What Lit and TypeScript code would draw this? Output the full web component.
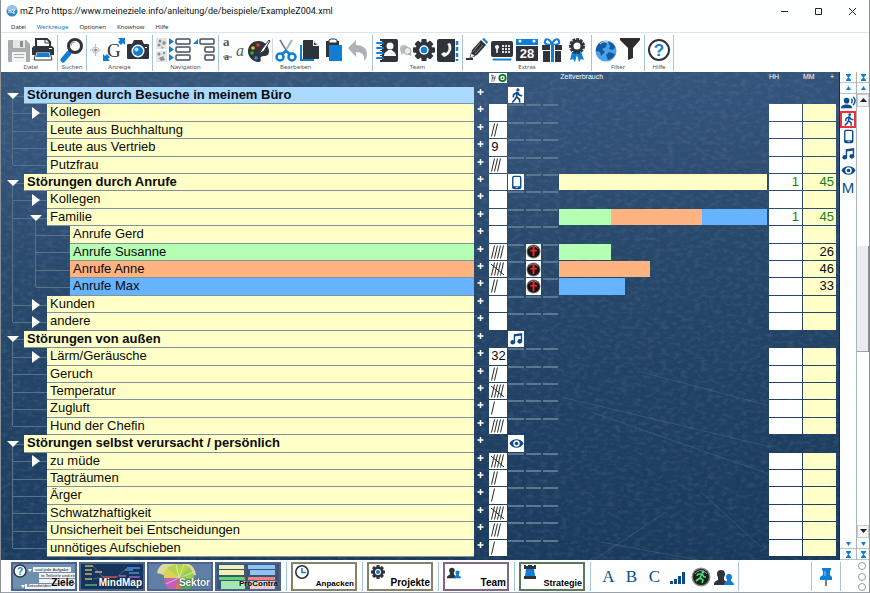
import { LitElement, html, css, svg, nothing } from "lit";
import { customElement } from "lit/decorators.js";
import { classMap } from "lit/directives/class-map.js";
import { styleMap } from "lit/directives/style-map.js";

const INK = "#2f343a";
const BLUE = "#0f7fd6";
const NAVY = "#0d4c8c";

const gear = (cx: number, cy: number, r: number) => svg`
  <g transform="translate(${cx} ${cy})" fill=${INK}>
    ${[0, 45, 90, 135].map((a) => svg`
      <rect x=${-r * 0.24} y=${-r} width=${r * 0.48} height=${r * 2} rx="1" transform="rotate(${a})"></rect>`)}
    <circle r=${r * 0.76}></circle>
    <circle r=${r * 0.43} fill="#fff"></circle>
    <circle r=${r * 0.3} fill=${BLUE}></circle>
  </g>`;

/* Toolbar drawings: 22x24 for large buttons, 11x24 for narrow ones. */
const TOOL_ICONS: Record<string, unknown> = {
  save: svg`<path d="M0 3a1 1 0 0 1 1-1h17l4 4v17a1 1 0 0 1-1 1H1a1 1 0 0 1-1-1z" fill="#a9acaf"/>
    <path d="M5 2h12v8H5z" fill="#e4e6e7"/><path d="M12 3h3v6h-3z" fill="#8c8f92"/>
    <path d="M4 14h14v10H4z" fill="#f3f3f3"/><path d="M6 16h10v1H6zM6 19h10v1H6z" fill="#a9acaf"/>`,
  print: svg`<path d="M4 8V1h11l3 3v4" fill="#fff" stroke=${INK} stroke-width="2"/>
    <path d="M13 1v4h5" fill="none" stroke=${INK} stroke-width="1"/>
    <path d="M2 8h18l2 2v7h-4v-3H4v3H0v-7z" fill=${INK}/><path d="M17 10h3v1h-3z" fill="#fff"/>
    <path d="M4 14h14l2 8H2z" fill="#fff" stroke=${INK} stroke-width="1"/><path d="M5 15h12l1 4H4z" fill=${BLUE}/>`,
  search: svg`<path d="M8 15 2 22" stroke=${BLUE} stroke-width="5" stroke-linecap="round"/>
    <circle cx="14" cy="8" r="6.500" fill="#fff" stroke=${INK} stroke-width="3"/>
    <path d="M10 8a4 4 0 0 1 4-4" fill="none" stroke="#9aa" stroke-width="1"/>`,
  target: svg`<g fill="none" stroke="#b9c0c8"><circle cx="5.500" cy="12" r="3"/><path d="M5.500 6v12M0 12h11"/></g>
    <circle cx="5.500" cy="12" r="1.500" fill="#8d959e"/>`,
  gscale: svg`<text x="4" y="19" font-family="Liberation Serif, serif" font-size="19" fill=${INK}>G</text>
    <path d="M15 0h7v7l-2-2-2 2-3-3 2-2z" fill=${BLUE}/><path d="M0 23h7l-2-2 2-2-3-3-2 2-2-2z" fill=${BLUE}/>`,
  camera: svg`<path d="M1 6h4l2-4h8l2 4h4a1 1 0 0 1 1 1v13a1 1 0 0 1-1 1H1a1 1 0 0 1-1-1V7a1 1 0 0 1 1-1z" fill=${INK}/>
    <circle cx="11" cy="13" r="6.500" fill="#fff"/><circle cx="11" cy="13" r="5" fill=${BLUE}/><circle cx="9.500" cy="11.500" r="2" fill="#bfe3ff"/>
    <path d="M18 9h2v1h-2z" fill="#fff"/>`,
  marks: svg`<path d="M0 0h11v11H0zM0 13h11v11H0z" fill="#e3e4e5"/>
    <g fill="#8b9096"><circle cx="4" cy="3" r="1.500"/><circle cx="8" cy="5" r="1.800"/><circle cx="3" cy="7" r="1.500"/><path d="M5 8l3 2-2 .5z"/>
    <circle cx="3" cy="16" r="1.500"/><circle cx="8" cy="15" r="1.200"/><path d="M3 20l4-2 2 4-4 1z"/></g>`,
  tree: svg`<g fill="#fff" stroke="#46505a" stroke-width="1.500"><rect x="7" y="1" width="14" height="5" rx="1"/><rect x="7" y="9" width="14" height="5" rx="1"/><rect x="7" y="17" width="14" height="5" rx="1"/></g>
    <path d="M0 0l5 3.500L0 7zM0 8l5 3.500L0 15zM0 16l5 3.500L0 23z" fill=${BLUE}/>`,
  branch: svg`<path d="M0 6h5V1z" fill=${BLUE}/><g fill="#fff" stroke="#46505a" stroke-width="1.500"><rect x="7" y="1" width="14" height="5" rx="1"/><rect x="12" y="9" width="9" height="5" rx="1"/><rect x="12" y="17" width="9" height="5" rx="1"/></g>`,
  letters: svg`<g font-family="Liberation Serif, serif" font-weight="bold" fill="#555b61"><text x="1" y="8" font-size="13">a</text><text x="2" y="22" font-size="10">a</text></g><path d="M1 19h9" stroke="#555b61"/>`,
  italic: svg`<text x="1" y="18" font-family="Liberation Serif, serif" font-style="italic" font-size="16" fill="#555b61">a</text>`,
  palette: svg`<path d="M11 3C4 3 0 8 0 13.500S5 24 11 24c2 0 2-2 1.500-3.500S14 18 16 18c3 0 5-1 5-5S17 3 11 3z" fill=${INK}/>
    <circle cx="5" cy="10" r="1.800" fill="#f4c20d"/><circle cx="10" cy="7" r="1.800" fill="#e33"/><circle cx="4" cy="15" r="1.800" fill="#3a3"/><circle cx="8" cy="20" r="1.800" fill="#2a8ee8"/>
    <path d="M21 2l-7 9-3 5 5-3 6-10z" fill="#fff" stroke=${INK}/>`,
  scissors: svg`<path d="M5 2l9 15M17 2L8 17" stroke="#9fb0bf" stroke-width="2"/><path d="M5 2l7 12" stroke="#5d6a76"/>
    <g fill="none" stroke=${BLUE} stroke-width="2.500"><circle cx="5" cy="19" r="3.500"/><circle cx="17" cy="19" r="3.500"/><path d="M7 16l4-3 4 3"/></g>`,
  copy: svg`<path d="M1 7v16h14v-2H3V7z" fill=${BLUE}/><path d="M5 2h9l6 6v13H4V3a1 1 0 0 1 1-1z" fill=${INK}/><path d="M14 2v6h6z" fill="#fff"/><path d="M15 4v3h3z" fill=${INK}/>`,
  paste: svg`<path d="M3 3h13v4H6v12H3z" fill=${INK}/><path d="M6 5V2l2-1h4l2 1v3z" fill="#fff" stroke=${INK}/><path d="M6 7h13v16H6z" fill=${BLUE}/>`,
  undo: svg`<path d="M9 2v5c6 0 11 3 11 9 0 3-1 5-3 7 1-6-2-9-8-9v5L1 10z" fill="#adb2b6"/>`,
  contacts: svg`<path d="M4 1h16a2 2 0 0 1 2 2v19a2 2 0 0 1-2 2H4z" fill=${INK}/>
    <path d="M0 5h6M0 10h6M0 15h6M0 20h6" stroke="#fff" stroke-width="4"/><path d="M1 5h6M1 10h6M1 15h6M1 20h6" stroke=${BLUE} stroke-width="1.800" stroke-linecap="round"/>
    <circle cx="14" cy="8" r="3.500" fill="#fff"/><path d="M8 18c0-4 3-4 4-6h4c1 2 4 2 4 6z" fill="#fff"/>`,
  chat: svg`<circle cx="4" cy="11" r="4" fill="#b9bcbf"/><path d="M1 13v4l3-2z" fill="#b9bcbf"/><circle cx="7.500" cy="13" r="3.500" fill="#e8eaeb" stroke="#a3a7aa"/><path d="M8 16l3 2v-4z" fill="#a3a7aa"/>`,
  gear: gear(11, 12, 11),
  phone: svg`<path d="M2 1h16v23H2a2 2 0 0 1-2-2V3a2 2 0 0 1 2-2z" fill=${INK}/><path d="M20 3v4M20 9v4M20 15v4M20 21v2" stroke=${BLUE} stroke-width="2.500"/>
    <path d="M13 5c3 4 1 12-6 14l-3-3 3-2 2 1c3-2 3-5 2-8l-1-1z" fill="#fff"/>`,
  pencil: svg`<path d="M4 20l2-8L15 2l5 5-9 10z" fill=${INK}/><path d="M16 1l5 5 1-2-4-4z" fill=${BLUE}/><path d="M4 20l1-5 4 3z" fill="#fff" stroke=${INK} stroke-width=".6"/><path d="M7 14l7-9M9 16l8-9" stroke="#7b8085"/><path d="M0 21h7" stroke=${INK} stroke-width="2"/>`,
  card: svg`<rect y="3" width="22" height="16" rx="2" fill=${INK}/><path d="M2 21h18v1H2z" fill=${BLUE} stroke=${BLUE}/>
    <circle cx="6" cy="9" r="2" fill="#fff"/><path d="M6 10v5" stroke="#fff" stroke-width="1.500"/><g fill="#dfe3e6"><path d="M11 7h2v2h-2zM14 7h2v2h-2zM17 7h2v2h-2zM11 10h2v2h-2zM14 10h2v2h-2zM17 10h2v2h-2zM11 13h2v2h-2zM14 13h2v2h-2zM17 13h2v2h-2z"/></g>`,
  calendar: svg`<path d="M0 1h22v6H0z" fill=${BLUE}/><circle cx="4" cy="3" r="1.500" fill="#fff"/><circle cx="18" cy="3" r="1.500" fill="#fff"/>
    <path d="M0 8h22v15H0z" fill=${INK}/><text x="11" y="20" text-anchor="middle" font-family="Liberation Sans, sans-serif" font-weight="bold" font-size="13" fill="#fff">28</text>`,
  gift: svg`<path d="M11 7C6 7 3 6 4 3s6-2 7 4c1-6 6-7 7-4s-2 4-7 4z" fill="none" stroke=${BLUE} stroke-width="2"/><path d="M1 7h20v5H1zM2 13h18v11H2z" fill=${INK}/><path d="M9 7h1v17H9zM13 7h1v17h-1z" fill="#fff"/><path d="M10 7h3v17h-3z" fill=${BLUE}/>`,
  award: svg`<path d="M6 14l-2 8 3-1 2 3 2-7 2 7 2-3 3 1-3-8z" fill=${BLUE}/><circle cx="11" cy="8" r="6.500" fill=${INK}/><circle cx="11" cy="8" r="7" fill="none" stroke=${INK} stroke-width="2" stroke-dasharray="3 1"/><circle cx="11" cy="8" r="3.500" fill="#fff"/>`,
  globe: svg`<circle cx="11" cy="13" r="10.500" fill="#4aa3ea"/><path d="M8 3C3 5 1 9 1 13l4 1 1 4 4-4-3-3 4-2 1-3zM13 4l2 4-1 3 4 1 2-3c-1-3-4-5-7-5zM14 14l-3 3 2 5c4-1 6-3 7-6z" fill="#145a9c"/><path d="M5 6c2-2 5-3 8-2" stroke="#d5ecff" fill="none"/>`,
  funnel: svg`<path d="M1 0h20v2l-7 8v10l-5 2V10L1 2z" fill="#2d2d2d"/>`,
  help: svg`<circle cx="11" cy="12" r="10" fill="#fff" stroke=${INK} stroke-width="2"/><text x="11" y="18" text-anchor="middle" font-family="Liberation Sans, sans-serif" font-weight="bold" font-size="17" fill=${BLUE}>?</text>`,
};

/* Small category glyphs on a 16x16 field. */
const GLYPHS: Record<string, unknown> = {
  speak: svg`<g fill=${NAVY}><circle cx="6" cy="6" r="3"/><path d="M0 14c0-3 3-4 6-4s6 1 6 4z"/></g><path d="M11 4q2 2 0 5M13 2q4 4 0 9" fill="none" stroke=${NAVY} stroke-width="1.500"/>`,
  walk: svg`<circle cx="9.500" cy="2" r="1.700" fill=${NAVY}/><path d="M9 4.500 8 9.500l3 2.500.5 3.500M8 9.500 6.500 12 3.500 15.500M9 4.500 5 7l-.5 3M9 4.500l2 3 3 1" fill="none" stroke=${NAVY} stroke-width="1.800"/>`,
  mobile: svg`<rect x="4" y="1.500" width="8.500" height="13" rx="1.500" fill="none" stroke=${NAVY} stroke-width="1.500"/><path d="M4 12h8v2H4z" fill=${NAVY}/><path d="M7 12.700h2.500v.8H7z" fill="#fff"/>`,
  music: svg`<g fill=${NAVY}><circle cx="4" cy="12" r="2.500"/><circle cx="11.500" cy="11" r="2.500"/></g><path d="M5.800 12V4L13.300 3v8M5.800 5l7.500-1" fill="none" stroke=${NAVY} stroke-width="1.500"/>`,
  eye: svg`<path d="M.5 8c3-6 12-6 15 0-3 6-12 6-15 0z" fill=${NAVY}/><circle cx="8" cy="8" r="3.400" fill="#fff"/><circle cx="8" cy="8" r="1.900" fill=${NAVY}/>`,
  alert: svg`<circle cx="8" cy="8" r="7.500" fill="#777"/><circle cx="8" cy="8" r="6.500" fill="#111"/><path d="M3 5a6 6 0 0 1 10 0" fill="none" stroke="#888"/><circle cx="8" cy="4" r="1.300" fill="#f22"/><path d="M4.500 7h7M8 5v8" stroke="#f22" stroke-width="2"/>`,
  counter: svg`<g fill="none" stroke="#333"><path d="M1 4l3-1M2 12 4 3M5 12l2-8M2 7h5"/></g>`,
};

const USERS = svg`<g fill=${INK}><circle cx="7" cy="5" r="4"/><path d="M0 16c0-4 2-4 4-5V8h6v3c2 1 3 2 3 5z"/></g>
  <g fill=${BLUE}><circle cx="15" cy="8" r="3"/><path d="M10 16c0-3 2-3 3-4v-2h4v2c1 1 3 1 3 4z"/></g>`;

const glyph = (name: string) => html`<svg class="glyph" viewBox="0 0 16 16" aria-hidden="true">${GLYPHS[name]}</svg>`;

interface Row {
  text: string;
  level: 0 | 1 | 2;
  toggle?: "open" | "closed";
  last?: boolean;
  plain?: boolean;
  tone?: string;
  tally?: number;
  digits?: boolean;
  icon?: string;
  alert?: boolean;
  bars?: { tone: string; value: number }[];
  hh?: string;
  mm?: string;
  sum?: boolean;
}

const TOTAL = 105;
const SUSANNE = { tone: "green", value: 26 };
const ANNE = { tone: "orange", value: 46 };
const MAX = { tone: "blue", value: 33 };

const ROWS: Row[] = [
  { text: "Störungen durch Besuche in meinem Büro", level: 0, toggle: "open", plain: true, tone: "sky", icon: "walk" },
  { text: "Kollegen", level: 1, toggle: "closed" },
  { text: "Leute aus Buchhaltung", level: 1, tally: 2 },
  { text: "Leute aus Vertrieb", level: 1, tally: 9, digits: true },
  { text: "Putzfrau", level: 1, tally: 3, last: true },
  { text: "Störungen durch Anrufe", level: 0, toggle: "open", icon: "mobile", bars: [{ tone: "cream", value: TOTAL }], hh: "1", mm: "45", sum: true },
  { text: "Kollegen", level: 1, toggle: "closed" },
  { text: "Familie", level: 1, toggle: "open", bars: [SUSANNE, ANNE, MAX], hh: "1", mm: "45", sum: true },
  { text: "Anrufe Gerd", level: 2 },
  { text: "Anrufe Susanne", level: 2, tone: "green", tally: 4, alert: true, bars: [SUSANNE], mm: "26" },
  { text: "Anrufe Anne", level: 2, tone: "orange", tally: 5, alert: true, bars: [ANNE], mm: "46" },
  { text: "Anrufe Max", level: 2, tone: "blue", tally: 2, alert: true, bars: [MAX], mm: "33", last: true },
  { text: "Kunden", level: 1, toggle: "closed" },
  { text: "andere", level: 1, toggle: "closed", last: true },
  { text: "Störungen von außen", level: 0, toggle: "open", plain: true, icon: "music" },
  { text: "Lärm/Geräusche", level: 1, toggle: "closed", tally: 32, digits: true },
  { text: "Geruch", level: 1, tally: 2 },
  { text: "Temperatur", level: 1, tally: 5 },
  { text: "Zugluft", level: 1, tally: 1 },
  { text: "Hund der Chefin", level: 1, tally: 4, last: true },
  { text: "Störungen selbst verursacht / persönlich", level: 0, toggle: "open", plain: true, icon: "eye" },
  { text: "zu müde", level: 1, toggle: "closed", tally: 5 },
  { text: "Tagträumen", level: 1, tally: 2 },
  { text: "Ärger", level: 1, tally: 1 },
  { text: "Schwatzhaftigkeit", level: 1, tally: 5 },
  { text: "Unsicherheit bei Entscheidungen", level: 1, tally: 3 },
  { text: "unnötiges Aufschieben", level: 1, tally: 1, last: true },
];

@customElement("app-titlebar")
class AppTitlebar extends LitElement {
  static styles = css`
    :host { display: flex; align-items: center; height: 22px; padding-left: 5px; font: 9px/16px Roboto, sans-serif; color: #111; }
    .logo { width: 12px; height: 12px; margin-right: 2px; }
    h1 { flex: 1; margin: 0; font: inherit; white-space: nowrap; overflow: hidden; }
    button { border: 0; background: none; padding: 0; width: 34px; height: 20px; display: grid; place-items: center; }
    svg { display: block; width: 9px; height: 9px; }
  `;
  render() {
    return html`
      <svg class="logo" viewBox="0 0 12 12"><circle cx="6" cy="6" r="5.500" fill="#2f86cf"/><path d="M1 5a5 5 0 0 1 10 0z" fill="#8fc4ee"/><path d="M3 8V5l1 1 1-1v3M6 5h3L6.500 8H9" fill="none" stroke="#fff"/></svg>
      <h1>mZ Pro https://www.meineziele.info/anleitung/de/beispiele/ExampleZ004.xml</h1>
      <button aria-label="Minimieren"><svg viewBox="0 0 9 9"><path d="M1 4.500h7" stroke="#222"/></svg></button>
      <button aria-label="Maximieren"><svg viewBox="0 0 9 9"><path d="M1.500 1.500h6v6h-6z" fill="none" stroke="#222"/></svg></button>
      <button aria-label="Schließen"><svg viewBox="0 0 9 9"><path d="M1 1l7 7M8 1L1 8" stroke="#222"/></svg></button>
    `;
  }
}

@customElement("app-ribbon")
class AppRibbon extends LitElement {
  static styles = css`
    :host { display: block; font: 6px/8px "Noto Sans", sans-serif; color: #333; }
    .tabs { display: flex; gap: 11px; height: 10px; padding-left: 10px; border-bottom: 1px solid #dfe4ea; }
    .tabs button { border: 0; background: none; padding: 0; font: inherit; color: inherit; }
    .tabs .active { color: #1673c4; }
    .groups { display: flex; height: 39px; padding: 2px 0 1px 4px; box-sizing: border-box; }
    .group { display: flex; flex-direction: column; justify-content: space-between; border-right: 1px solid #a9c2dc; padding: 3px 3px 0; }
    .tools { display: flex; gap: 2px; }
    .roomy .tools { gap: 3px; }
    .tools button { border: 0; padding: 0; background: none; width: 22px; height: 24px; }
    .tools .small { width: 11px; }
    .tools svg { display: block; width: 100%; height: 24px; overflow: visible; }
    .rule { width: 1px; background: #cfdae6; }
    .caption { text-align: center; color: #555; }
  `;
  static tabs = ["Datei", "Werkzeuge", "Optionen", "Knowhow", "Hilfe"];
  static small = ["target", "marks", "letters", "italic", "chat"];
  static groups: [string, string[]][] = [
    ["Datei", ["save", "print"]],
    ["Suchen", ["search"]],
    ["Anzeige", ["target", "gscale", "camera"]],
    ["Navigation", ["marks", "tree", "branch"]],
    ["Bearbeiten", ["letters", "italic", "palette", "|", "scissors", "copy", "paste", "undo"]],
    ["Team", ["contacts", "chat", "gear", "phone"]],
    ["Extras", ["pencil", "card", "calendar", "gift", "award"]],
    ["Filter", ["globe", "funnel"]],
    ["Hilfe", ["help"]],
  ];
  tool(name: string) {
    if (name === "|") return html`<span class="rule"></span>`;
    const small = AppRibbon.small.includes(name);
    return html`<button class=${classMap({ small })} aria-label=${name}>
      <svg viewBox=${small ? "0 0 11 24" : "0 0 22 24"}>${TOOL_ICONS[name]}</svg></button>`;
  }
  render() {
    return html`
      <nav class="tabs">${AppRibbon.tabs.map((t, i) => html`<button class=${classMap({ active: i === 1 })}>${t}</button>`)}</nav>
      <div class="groups">
        ${AppRibbon.groups.map(([name, tools]) => html`
          <div class=${classMap({ group: true, roomy: name === "Extras" })}>
            <div class="tools">${tools.map((t) => this.tool(t))}</div>
            <div class="caption">${name}</div>
          </div>`)}
      </div>`;
  }
}

@customElement("app-board")
class AppBoard extends LitElement {
  static styles = css`
    :host { display: flex; position: relative; min-width: 0; background: linear-gradient(175deg, #38587a 0%, #34537a 16%, #2a4a6c 36%, #234366 60%, #1a3a5c 100%); font: 13px/16px "Liberation Sans", Arial, sans-serif; color: #0a0a0a; }
    .texture { position: absolute; inset: 0; width: 100%; height: 100%; }
    table { position: relative; flex: 1; display: flex; flex-direction: column; padding: 0 3px 3px 0; min-width: 0; }
    thead { display: block; height: 15px; }
    tbody { flex: 1; display: flex; flex-direction: column; }
    tr { display: grid; grid-template-columns: minmax(0, 474fr) 14px 19px 18px 17px 17px minmax(0, 209fr) 34px 34px; }
    tbody tr { flex: 1; min-height: 17px; }
    th, td { padding: 0; text-align: left; font-weight: normal; min-width: 0; }
    thead th { color: #fff; font-size: 7px; line-height: 9px; padding-left: 1px; }
    thead .counter { display: flex; background: #fff; height: 10px; margin: 1px 0 0 1px; padding: 0; }
    .counter svg { width: 9px; height: 10px; }
    .mm-head { display: flex; justify-content: space-between; padding-right: 2px; }
    .name { display: flex; }
    .guide { flex: none; width: 23px; display: grid; grid-template-columns: 12px 11px; grid-template-rows: 1fr 1fr; position: relative; }
    .guide i { border: 0 solid #55748f; }
    .tl { grid-area: 1 / 1; }
    .bl { grid-area: 2 / 1; }
    .br { grid-area: 2 / 2; }
    .down .bl { border-right-width: 1px; }
    .up .tl { border-right-width: 1px; }
    .right .br { border-top-width: 1px; }
    .left .bl { border-top-width: 1px; }
    .toggle { position: absolute; inset: 0; border: 0; padding: 0; background: none; display: grid; place-items: center; }
    .toggle svg { width: 12px; height: 12px; display: block; }
    .label { flex: 1; padding-left: 3px; white-space: nowrap; overflow: hidden; background: #ffffc8; border-bottom: 1px solid #7d93a0; color: #0a0a0a; }
    .head { font-weight: bold; }
    .sky { background: #aadaff; }
    .cream { background: #ffffc8; }
    .green { background: #b4ffb4; }
    .orange { background: #ffb380; }
    .blue { background: #66b3ff; }
    .add { display: flex; justify-content: center; align-items: flex-start; padding-right: 2px; }
    .add button { border: 0; padding: 0; background: none; width: 9px; height: 9px; }
    .add svg { display: block; width: 7px; height: 9px; margin: auto; }
    .box { background: #fff; margin: 0 0 1px 1px; overflow: hidden; }
    .tally { padding-left: 2px; white-space: nowrap; }
    .tally svg { display: block; width: 16px; height: 16px; }
    .slot { margin: 0 1px 1px; border-top: 2px solid #5a7690; box-sizing: border-box; }
    .glyph { display: block; width: 15px; height: 15px; margin: auto; }
    .mark { background: #fff; margin: 0 1px 1px; display: flex; }
    .bars { display: flex; padding: 0 1px 1px 0; }
    .time { text-align: right; padding-right: 3px; }
    .mins { background: #ffffc8; padding-right: 2px; }
    .sum { color: #168016; }
  `;
  guide(lines: string, toggle?: string) {
    return html`<span class="guide ${lines}"><i class="tl"></i><i class="bl"></i><i class="br"></i>
      ${toggle ? html`<button class="toggle" aria-label=${toggle === "open" ? "Zuklappen" : "Aufklappen"}>
        <svg viewBox="0 0 12 12"><path d=${toggle === "open" ? "M0 3h12L6 9z" : "M2 0l8 6-8 6z"} fill="#fff"/></svg></button>` : nothing}</span>`;
  }
  guides(r: Row) {
    const stop = r.last ? "" : "down";
    if (r.level === 0) return this.guide("down right", r.toggle);
    if (r.level === 1) return html`${this.guide(`up right ${stop}`)}${this.guide(r.toggle === "open" ? "left right down" : "left right", r.toggle)}`;
    return html`${this.guide("up down")}${this.guide(`up right ${stop}`)}${this.guide("left right")}`;
  }
  tally(r: Row) {
    if (!r.tally) return nothing;
    if (r.digits) return html`${r.tally}`;
    const strokes = Array.from({ length: Math.min(r.tally, 4) }, (_, i) => `M${0.5 + i * 3} 14.500l3-13`).join("");
    return html`<svg viewBox="0 0 16 16" role="img" aria-label=${r.tally}><path d=${strokes + (r.tally > 4 ? "M0 3l13 11" : "")} fill="none" stroke="#2a2a22"/></svg>`;
  }
  slot3(r: Row, i: number) {
    if (i === 0 && r.icon) return html`<td class="mark">${glyph(r.icon)}</td>`;
    if (i === 1 && r.alert) return html`<td class="mark">${glyph("alert")}</td>`;
    return html`<td class=${classMap({ slot: !r.plain })}></td>`;
  }
  row(r: Row) {
    return html`<tr>
      <td class="name">${this.guides(r)}<span class="label ${r.tone ?? ""} ${r.level ? "" : "head"}">${r.text}</span></td>
      <td class="add"><button aria-label="Hinzufügen"><svg viewBox="0 0 7 9"><path d="M3.500 2v6M.5 5h6" stroke="#fff" stroke-width="1.500"/></svg></button></td>
      <td class=${classMap({ box: !r.plain, tally: true })}>${this.tally(r)}</td>
      ${[0, 1, 2].map((i) => this.slot3(r, i))}
      <td class="bars">${(r.bars ?? []).map((b) => html`<span class=${b.tone} style=${styleMap({ width: `${(b.value / TOTAL) * 100}%` })}></span>`)}</td>
      <td class=${classMap({ box: !r.plain, time: true, sum: !!r.sum })}>${r.hh}</td>
      <td class=${classMap({ box: !r.plain, time: true, mins: !r.plain, sum: !!r.sum })}>${r.mm}</td>
    </tr>`;
  }
  render() {
    return html`
      <svg class="texture" aria-hidden="true">
        <filter id="grain" x="0" y="0" width="100%" height="100%">
          <feTurbulence type="fractalNoise" baseFrequency="0.150 0.260" numOctaves="4" seed="7"></feTurbulence>
          <feColorMatrix values="0 0 0 0 .62  0 0 0 0 .72  0 0 0 0 .82  0 1.300 0 0 -.58"></feColorMatrix>
        </filter>
        <rect width="100%" height="100%" filter="url(#grain)" opacity=".18"></rect>
        <g stroke="#86a0b8" opacity=".22" fill="none"><path d="M560 325l210 50M590 340l230 80M640 300l190 50M600 470l140 26M575 500l90-60M700 420l60 55"/></g>
      </svg>
      <table>
        <thead><tr>
          <th></th><th></th>
          <th class="counter"><svg viewBox="0 0 9 14">${GLYPHS.counter}</svg><svg viewBox="0 0 10 10"><circle cx="5" cy="5" r="3.500" fill="#fff" stroke="#087a1c" stroke-width="2"/><circle cx="5" cy="5" r="1" fill="#087a1c"/></svg></th>
          <th></th><th></th><th></th><th>Zeitverbrauch</th><th>HH</th><th class="mm-head"><span>MM</span><span>+</span></th>
        </tr></thead>
        <tbody>${ROWS.map((r) => this.row(r))}</tbody>
      </table>`;
  }
}

@customElement("app-side")
class AppSide extends LitElement {
  static styles = css`
    :host { display: grid; grid-template-columns: 16px 13px; background: #fdfefe; border-left: 1px solid #12304f; }
    .col { display: flex; flex-direction: column; min-width: 0; }
    .scroll { border-left: 1px solid #a9b4bd; }
    button { border: 0; padding: 0; background: none; color: #0d4c8c; font: 15px/16px "Liberation Sans", sans-serif; }
    .step { height: 11px; flex: none; border-bottom: 1px solid #b9c3cc; display: grid; place-items: center; }
    .step svg { width: 7px; height: 7px; display: block; }
    .cats { flex: 1; display: flex; flex-direction: column; }
    .cats button { height: 17px; display: grid; place-items: center; box-sizing: border-box; }
    .cats .on { border: 2px solid #f0303a; background: #fff; }
    .cats svg { width: 15px; height: 15px; display: block; }
    .cats .on svg { width: 13px; height: 13px; }
    .end { height: 13px; border: 1px solid #c8ccd0; background: #f5f5f5; display: grid; place-items: center; }
    .end svg { width: 7px; height: 5px; }
    .track { flex: 1; display: flex; flex-direction: column; }
    .before { flex: 140; }
    .thumb { flex: 106; background: #eaecee; border-bottom: 1px solid #a0a0a0; border-right: 1px solid #8a8a8a; }
    .after { flex: 175; }
  `;
  step(d: string, label: string) {
    return html`<button class="step" aria-label=${label}><svg viewBox="0 0 7 7"><path d=${d} fill=${BLUE}/></svg></button>`;
  }
  top() { return html`${this.step("M1 0h5v1H1zM1 1h5L3.500 4zM3.500 3L6 6H1zM1 6h5v1H1z", "Anfang")}${this.step("M3.500 1L6 5H1z", "Hoch")}`; }
  bottom() { return html`${this.step("M1 2h5L3.500 6z", "Runter")}${this.step("M1 0h5v1H1zM1 1h5L3.500 4zM3.500 3L6 6H1zM1 6h5v1H1z", "Ende")}`; }
  render() {
    return html`
      <div class="col">${this.top()}
        <div class="cats">${["speak", "walk", "mobile", "music", "eye"].map((n) => html`<button class=${classMap({ on: n === "walk" })} aria-label=${n}>${glyph(n)}</button>`)}<button>M</button></div>
        ${this.bottom()}</div>
      <div class="col scroll">${this.top()}
        <button class="end" aria-label="Zeile hoch"><svg viewBox="0 0 7 5"><path d="M3.500 0L7 4H0z" fill="#222"/></svg></button>
        <div class="track"><div class="before"></div><div class="thumb"></div><div class="after"></div></div>
        <button class="end" aria-label="Zeile runter"><svg viewBox="0 0 7 5"><path d="M0 0h7L3.500 4z" fill="#222"/></svg></button>
        ${this.bottom()}</div>`;
  }
}

/* Miniature previews shown inside the view buttons, 62x25. */
const THUMBS: Record<string, unknown> = {
  Ziele: svg`<rect width="62" height="25" fill="#6f8fae"/><g fill="#f1f4f6"><path d="M20 3h38v5H20zM26 9h36v5H26zM26 15h36v4H26zM12 20h50v5H12z"/></g>
    <g font-family="Liberation Sans, sans-serif" font-size="4" fill="#555"><text x="22" y="7">und jede Aufgabe</text><text x="28" y="13">m Teilziele und ein</text><text x="14" y="23">Entscheiden</text></g>
    <path d="M15 5h4l-2 3zM8 21h4l-2 3z" fill="#fff"/><circle cx="7" cy="7" r="6" fill="#fff" stroke="#30363c" stroke-width="1.500"/><text x="7" y="11" text-anchor="middle" font-family="Liberation Sans, sans-serif" font-weight="bold" font-size="10" fill=${BLUE}>?</text>`,
  MindMap: svg`<rect width="62" height="25" fill="#17345a"/><g stroke-width="1.500"><path d="M4 2h8M4 6h7M4 10h7M14 8h7M4 15h7" stroke="#c8b46a"/><path d="M46 4h13M48 9h10M44 6h8" stroke="#4f8fe0"/><path d="M22 13h14" stroke="#d2504c"/><path d="M38 12h7M48 13h11" stroke="#9a62c8"/><path d="M4 21h12" stroke="#5fae7d"/></g><path d="M12 2l10 11M12 15l10-2M36 13l10-9" stroke="#7d93b0" stroke-width=".5" fill="none"/>`,
  Sektor: svg`<rect width="62" height="25" fill="#5f7fa6"/><path d="M25 14L8 9Q9 3 14 0h26q6 3 7 11z" fill="#ddd9a0"/><path d="M30 14L18 4q12-8 22-1z" fill="#b7d34a"/><path d="M30 14L40 3q6 6 5 13z" fill="#9bcf50"/><path d="M30 14l15 2q-1 5-4 9H31z" fill="#55a860"/><path d="M30 14L18 4q-4 4-3 10z" fill="#d9d35a"/><path d="M30 14H15q0 7 4 11h7z" fill="#c560b8"/><path d="M30 14l-4 11h6z" fill="#e07a4a"/><g stroke="#fff" stroke-width=".5"><path d="M30 14L27 0M30 14L35 0M30 14L45 8M30 14L17 20"/></g>`,
  ProContra: svg`<rect width="62" height="25" fill="#375678"/><path d="M2 1h25v4H2zM2 6h25v5H2z" fill="#f1f0b2"/><path d="M31 1h27v4H31zM33 6h25v5H33z" fill="#8fc3f1"/><path d="M2 13h26v3H2z" fill="#5fd872"/><path d="M4 17h24v8H4z" fill="#a5e8ae"/><path d="M31 13h27v3H31z" fill="#f08282"/><path d="M33 17h25v8H33z" fill="#efc8c8"/><path d="M28 3v18M59 3v8" stroke="#d33" stroke-width="1" stroke-dasharray="2 3"/>`,
  Anpacken: svg`<circle cx="9" cy="8" r="6.200" fill="#fff" stroke=${INK} stroke-width="1.600"/><path d="M9 4v4.500h4" fill="none" stroke=${BLUE} stroke-width="1.500"/>`,
  Projekte: gear(9, 8, 7),
  Team: svg`<g transform="translate(2 3) scale(.7)">${USERS}</g>`,
  Strategie: svg`<path d="M3 1h2v1h2V1h4v1h2V1h2v4H3z" fill=${INK}/><path d="M5 5h8l1 7H4z" fill=${BLUE}/><path d="M3 12h12v3H3z" fill=${INK}/>`,
};

@customElement("app-footer")
class AppFooter extends LitElement {
  static styles = css`
    :host { display: flex; align-items: stretch; height: 33px; box-sizing: border-box; padding: 2px 0 1px 10px; background: #fdfefe; border-bottom: 1px solid #9aa1a8; }
    .views { display: flex; gap: 2px; }
    .solo { display: flex; }
    .view { display: grid; align-items: end; justify-items: end; width: 66px; height: 29px; box-sizing: border-box; padding: 0; border: 2px solid #4b6490; background: #fff; font: bold 10px/11px "Liberation Sans", Arial, sans-serif; color: #000; }
    .view svg { grid-area: 1 / 1; width: 62px; height: 25px; display: block; }
    .view span { grid-area: 1 / 1; padding: 0 1px 1px; text-shadow: 0 0 2px #fff; }
    .MindMap span, .Sektor span { color: #fff; text-shadow: 0 0 2px #123; }
    .ProContra span, .Anpacken span { font-size: 8px; line-height: 9px; }
    .Strategie span { font-size: 9px; line-height: 10px; }
    .Anpacken, .Projekte { border-color: #86826a; }
    .Team { border-color: #80648a; }
    .Strategie { border-color: #577a5c; }
    .rule { width: 1px; background: #a9c2dc; margin: 0 4px 0 5px; }
    .marks { display: flex; align-items: center; gap: 4px; padding-left: 4px; }
    .marks button, .pin { border: 0; padding: 0; background: none; width: 19px; height: 20px; display: grid; place-items: center; font: 17px/20px "Liberation Serif", serif; color: #0d4c8c; }
    .marks svg { width: 20px; height: 20px; display: block; }
    .space { flex: 1; }
    .pin { align-self: center; }
    .pin svg { width: 14px; height: 20px; display: block; }
    .dots { display: flex; flex-direction: column; justify-content: space-between; align-items: center; width: 24px; box-sizing: border-box; padding-left: 10px; }
    .dots input { appearance: none; margin: 0; width: 8px; height: 8px; border: 1px solid #9a9a9a; border-radius: 50%; background: #fff; }
  `;
  view(n: string) {
    return html`<button class="view ${n}"><svg viewBox="0 0 62 25" aria-hidden="true">${THUMBS[n]}</svg><span>${n}</span></button>`;
  }
  render() {
    return html`
      <div class="views">${["Ziele", "MindMap", "Sektor", "ProContra"].map((n) => this.view(n))}</div>
      <span class="rule"></span>
      ${["Anpacken", "Projekte", "Team", "Strategie"].map((n) => html`<div class="solo">${this.view(n)}</div><span class="rule"></span>`)}
      <div class="marks">
        <button>A</button><button>B</button><button>C</button>
        <button aria-label="Balken"><svg viewBox="0 0 20 20"><path d="M2 14h3v3H2zM6 12h3v5H6zM10 9h3v8h-3zM14 5h3v12h-3z" fill=${NAVY}/></svg></button>
        <button aria-label="Aktiv"><svg viewBox="0 0 20 20"><circle cx="10" cy="10" r="9.500" fill="#8b8b8b"/><circle cx="10" cy="10" r="8" fill="#1a1f1c"/><path d="M4 7a7 7 0 0 1 12 0" stroke="#999" fill="none"/><circle cx="12" cy="5" r="1.500" fill="#4be07a"/><path d="M11 7l-2 4 3 2-1 3M9 11l-4 3M11 7L7 7 6 9M11 7l2 3h2" stroke="#4be07a" stroke-width="1.600" fill="none"/></svg></button>
        <button aria-label="Personen"><svg viewBox="0 -1 20 18">${USERS}</svg></button>
      </div>
      <span class="rule"></span><span class="space"></span><span class="rule"></span>
      <button class="pin" aria-label="Anheften"><svg viewBox="0 0 14 20"><path d="M7 12v7" stroke="#555" stroke-width="1.500"/><path d="M3 1h9v2l-1 1v4l2 2v3H1v-3l3-2V4L3 3z" fill=${BLUE}/><path d="M6 4v5" stroke="#9bd0f7"/></svg></button>
      <span class="rule"></span>
      <div class="dots">${[1, 2, 3].map((n) => html`<input type="radio" name="page" aria-label="Seite ${n}">`)}</div>`;
  }
}

@customElement("app-root")
class AppRoot extends LitElement {
  static styles = css`
    :host { display: flex; flex-direction: column; min-height: 100vh; box-sizing: border-box; background: #fdfefe; border-left: 1px solid #8b9096; border-right: 1px solid #8b9096; overflow: hidden; }
    .work { flex: 1; display: flex; }
    app-board { flex: 1; }
    app-side { flex: none; }
  `;
  render() {
    return html`<app-titlebar></app-titlebar><app-ribbon></app-ribbon>
      <main class="work"><app-board></app-board><app-side></app-side></main>
      <app-footer></app-footer>`;
  }
}
